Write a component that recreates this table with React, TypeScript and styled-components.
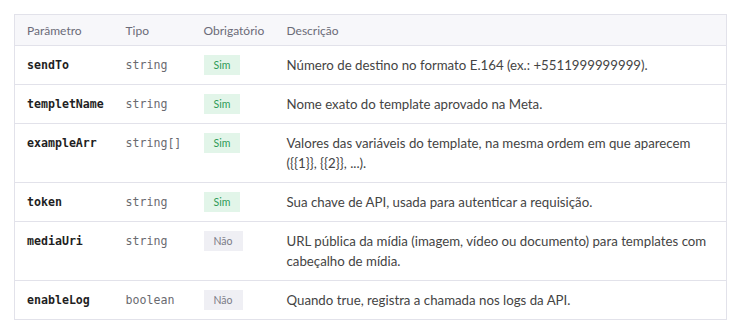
import React from "react";
import styled, { createGlobalStyle } from "styled-components";

const Global = createGlobalStyle`
  html, body { margin: 0; padding: 0; background: #ffffff; }
  body { font-family: Lato, "Open Sans", sans-serif; }
`;

const Page = styled.div`
  padding: 14px;
`;

const Table = styled.table`
  width: 713px;
  table-layout: fixed;
  border-collapse: collapse;
  border: 1px solid #e2e2ea;
  font-family: Lato, sans-serif;
`;

const Col = styled.col<{ $w?: number }>`
  ${(p) => (p.$w ? `width: ${p.$w}px;` : "")}
`;

const HeadRow = styled.tr`
  background: #f7f7fa;
`;

const Th = styled.th`
  text-align: left;
  font-weight: 400;
  font-size: 12px;
  color: #6b6b78;
  padding: 8px 12px 7px 12px;
  line-height: 15px;
`;

const Row = styled.tr`
  border-top: 1px solid #e2e2ea;
`;

const Td = styled.td`
  padding: 9px 12px;
  vertical-align: top;
  font-size: 13.25px;
  line-height: 20px;
  color: #444;
`;

const Name = styled.code`
  display: block;
  font-family: "DejaVu Sans Mono", monospace;
  font-weight: 700;
  font-size: 11.6px;
  line-height: 20px;
  color: #1f1f24;
`;

const Type = styled.code`
  display: block;
  font-family: "DejaVu Sans Mono", monospace;
  font-size: 11.6px;
  line-height: 20px;
  color: #6a6a70;
`;

const Badge = styled.span<{ $yes: boolean }>`
  display: inline-block;
  padding: 0 10px;
  height: 20px;
  line-height: 20px;
  font-size: 10.5px;
  background: ${(p) => (p.$yes ? "#e2f5e9" : "#efeff4")};
  color: ${(p) => (p.$yes ? "#2e9b58" : "#7b7b86")};
  vertical-align: top;
`;

type P = { name: string; type: string; req: boolean; desc: React.ReactNode };

const rows: P[] = [
  { name: "sendTo", type: "string", req: true, desc: "Número de destino no formato E.164 (ex.: +5511999999999)." },
  { name: "templetName", type: "string", req: true, desc: "Nome exato do template aprovado na Meta." },
  {
    name: "exampleArr",
    type: "string[]",
    req: true,
    desc: (
      <>
        Valores das variáveis do template, na mesma ordem em que aparecem
        <br />
        ({"{{1}}"}, {"{{2}}"}, ...).
      </>
    ),
  },
  { name: "token", type: "string", req: true, desc: "Sua chave de API, usada para autenticar a requisição." },
  {
    name: "mediaUri",
    type: "string",
    req: false,
    desc: (
      <>
        URL pública da mídia (imagem, vídeo ou documento) para templates com
        <br />
        cabeçalho de mídia.
      </>
    ),
  },
  { name: "enableLog", type: "boolean", req: false, desc: "Quando true, registra a chamada nos logs da API." },
];

export default function App() {
  return (
    <Page>
      <Global />
      <Table>
        <colgroup>
          <Col $w={99} />
          <Col $w={78} />
          <Col $w={83} />
          <Col />
        </colgroup>
        <thead>
          <HeadRow>
            <Th>Parâmetro</Th>
            <Th>Tipo</Th>
            <Th>Obrigatório</Th>
            <Th>Descrição</Th>
          </HeadRow>
        </thead>
        <tbody>
          {rows.map((r) => (
            <Row key={r.name}>
              <Td>
                <Name>{r.name}</Name>
              </Td>
              <Td>
                <Type>{r.type}</Type>
              </Td>
              <Td>
                <Badge $yes={r.req}>{r.req ? "Sim" : "Não"}</Badge>
              </Td>
              <Td>{r.desc}</Td>
            </Row>
          ))}
        </tbody>
      </Table>
    </Page>
  );
}
